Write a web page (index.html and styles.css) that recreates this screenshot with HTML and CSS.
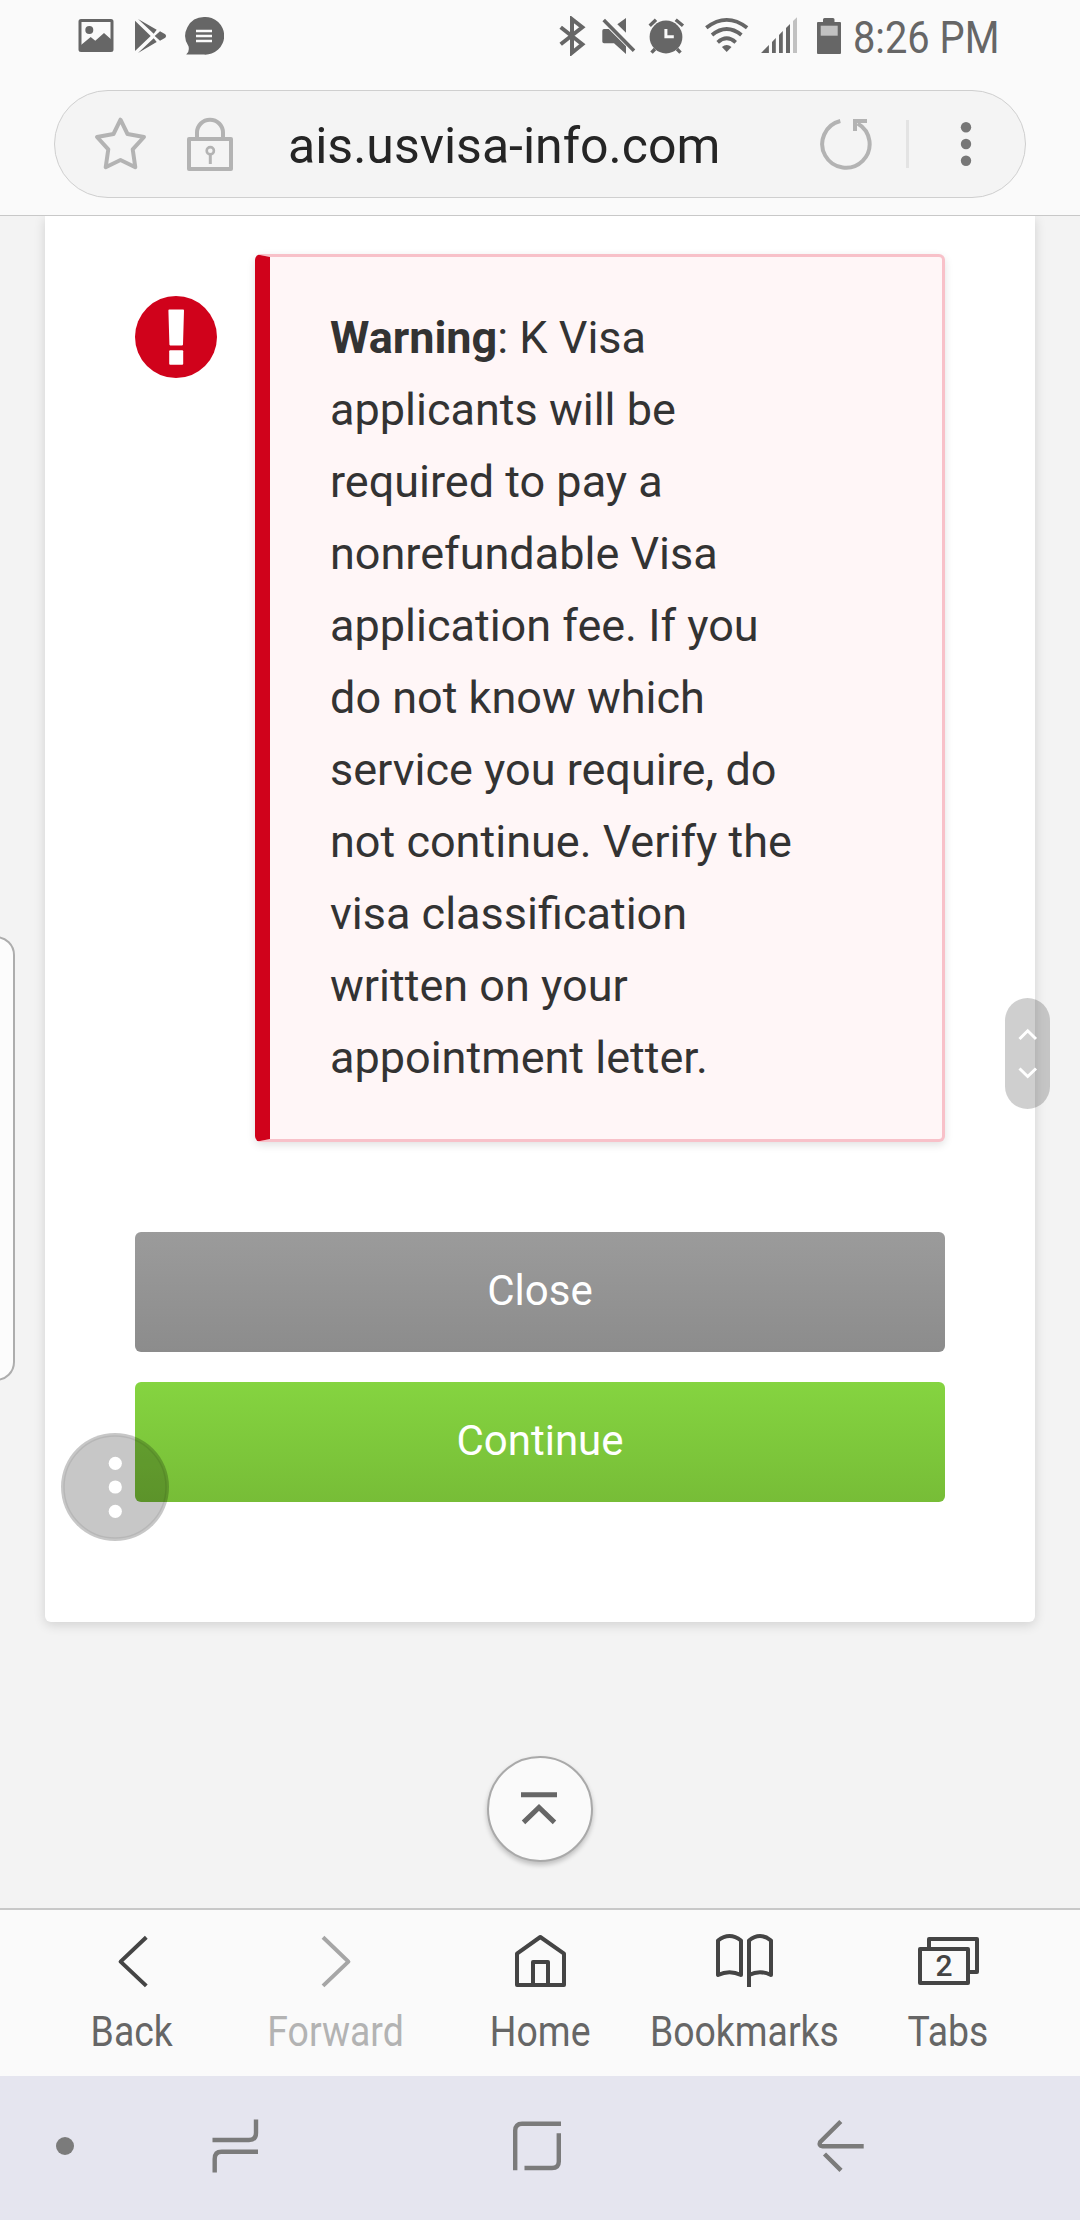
FILE: index.html
```
<!DOCTYPE html>
<html lang="en">
<head>
    <meta charset="UTF-8">
    <meta name="viewport" content="width=device-width, initial-scale=1.0">
    <title>ais.usvisa-info.com</title>
    <link rel="stylesheet" href="styles.css">
</head>
<body>
    <header class="top">
        <div class="status">
            <div class="status-group">
                <svg width="40" height="40" viewBox="0 0 40 40">
                    <rect x="2" y="4.5" width="32" height="30" rx="1" fill="none" stroke="#666" stroke-width="3"/>
                    <circle cx="11.3" cy="14" r="4"/>
                    <path d="M3 29L12.7 21L17.3 24.7L26 17L33 23.3V35H3Z"/>
                </svg>
                <svg width="34" height="40" viewBox="0 0 34 40">
                    <path d="M1 4.7L16.7 20L1 35ZM4 3L22.7 13.7L19.7 17.7ZM4 37L22.7 26L19.7 22.3ZM26 15.3L31.3 18.3Q33 20 31.3 21.7L26 24.7L20.7 20Z"/>
                </svg>
                <svg width="40" height="40" viewBox="0 0 40 40">
                    <path d="M20 1.1A18.8 18.8 0 1 1 20 38.6H2.2Q5.6 36 4.6 30.6A18.8 18.8 0 0 1 20 1.1Z"/>
                    <path d="M12 15H28M12 20H28M12 25H28" stroke="#fafafa" stroke-width="2.4"/>
                </svg>
            </div>
            <div class="status-group status-right">
                <svg width="32" height="40" viewBox="0 0 32 40">
                    <path d="M2.7 11.3L24.3 28.3L14 36.7V3.2L24.3 11.3L2.7 28.3" fill="none" stroke="#666" stroke-width="4"/>
                </svg>
                <svg width="38" height="40" viewBox="0 0 38 40">
                    <path d="M4 13H8.7L26 30.3V38L14 27.3H4Q2.3 27.3 2.3 25.5V14.7Q2.3 13 4 13ZM26 2V16.7L17.3 8.3Z"/>
                    <path d="M3.7 4L34 34.7" stroke="#666" stroke-width="3.6"/>
                </svg>
                <svg width="46" height="40" viewBox="0 0 46 40">
                    <circle cx="18" cy="21" r="16.4"/>
                    <path d="M1.7 9.7L8 3.7M27.7 3.7L35 9.7M3.5 36.7L7 33M32.5 36.7L29 33" stroke="#666" stroke-width="3.4"/>
                    <path d="M17.9 13V20.7H25.8" fill="none" stroke="#fafafa" stroke-width="3"/>
                </svg>
                <svg width="46" height="40" viewBox="0 0 46 40">
                    <path d="M2.3 11.8Q22.7 -4 43.1 11.8M8 19Q22.7 7 37.4 19M13.7 26.3Q22.7 18.3 31.7 26.3" fill="none" stroke="#666" stroke-width="3.8"/>
                    <path d="M17.9 31Q22.7 27.2 27.5 31L22.7 36Z"/>
                </svg>
                <svg width="46" height="40" viewBox="0 0 46 40">
                    <path d="M1 37L8.9 29V37ZM12 37V26L15.8 22V37ZM19 37V19L22.8 15V37ZM26 37V12L30 8V37Z"/>
                    <path d="M33 37V5L37 1.3V37Z" fill="#c1c1c1"/>
                </svg>
                <svg width="26" height="40" viewBox="0 0 26 40">
                    <path d="M2 6H7V3.5Q7 2 8.5 2H17Q18.5 2 18.5 3.5V6H24Q25 6 25 7V37Q25 38 24 38H2Q1 38 1 37V7Q1 6 2 6Z"/>
                    <rect x="4.7" y="9.7" width="17" height="10" fill="#c1c1c1"/>
                </svg>
                <span class="clock">8:26 PM</span>
            </div>
        </div>
        <div class="urlbar">
            <svg class="star" width="54" height="56" viewBox="0 0 54 56" fill="none" stroke="#b3b3b3" stroke-width="4" stroke-linejoin="round">
                <path d="M26.5 3.7L33.5 18L50 21L38.7 33.3L41.3 51.2L26.5 44L11.7 51.2L14.3 33.3L3 21L19.5 18Z"/>
            </svg>
            <svg class="lock" width="48" height="56" viewBox="0 0 48 56" fill="none" stroke="#b3b3b3" stroke-width="4" stroke-linejoin="round">
                <rect x="3" y="23" width="42" height="30"/>
                <path d="M11 22V16.7a13 13 0 0 1 26 0V22"/>
                <circle cx="24.3" cy="34.7" r="3.6" stroke-width="2.6"/>
                <path d="M24.3 38V48" stroke-width="3"/>
            </svg>
            <span class="url">ais.usvisa-info.com</span>
            <svg width="56" height="56" viewBox="0 0 56 56" fill="none" stroke="#b3b3b3" stroke-width="4">
                <path d="M22.3 5A23.7 23.7 0 1 0 39.6 7.4"/>
                <path d="M37 15V5H49"/>
            </svg>
            <div class="divider"></div>
            <svg class="more" width="12" height="48" viewBox="0 0 12 48" fill="#777">
                <circle cx="6" cy="7.3" r="5.2"/>
                <circle cx="6" cy="24" r="5.2"/>
                <circle cx="6" cy="40.7" r="5.2"/>
            </svg>
        </div>
    </header>

    <main class="page">
        <section class="card">
            <div class="notice">
                <svg class="alert" width="82" height="84" viewBox="0 0 82 84">
                    <circle cx="41" cy="42" r="41" fill="#d0021b"/>
                    <path d="M34.2 14.5H48.2Q49 14.5 49 15.4L48 49.6Q48 50.4 47.2 50.4H35.2Q34.4 50.4 34.4 49.6L33.4 15.4Q33.4 14.5 34.2 14.5Z" fill="#fff"/>
                    <rect x="34.2" y="55.3" width="14" height="14.4" rx="1" fill="#fff"/>
                </svg>
                <div class="warning">
                    <strong>Warning</strong>: K Visa applicants will be required to pay a nonrefundable Visa application fee. If you do not know which service you require, do not continue. Verify the visa classification written on your appointment letter.
                </div>
            </div>
            <div class="actions">
                <button class="btn btn-close">Close</button>
                <button class="btn btn-continue">Continue</button>
            </div>
        </section>

        <!-- floating controls -->
        <div class="edge-panel"></div>
        <div class="scroller">
            <svg width="45" height="111" viewBox="0 0 45 111" fill="none" stroke="#fff" stroke-width="3">
                <path d="M14.5 41L22.7 32.8L31 41M14.5 70.5L22.7 78.5L31 70.5"/>
            </svg>
        </div>
        <div class="assist">
            <svg width="108" height="108" viewBox="0 0 108 108" fill="#fff">
                <circle cx="54" cy="54" r="51" fill="none" stroke="#000" stroke-opacity="0.08" stroke-width="1.5"/>
                <circle cx="54.3" cy="30.3" r="6.6"/>
                <circle cx="54.3" cy="54" r="6.6"/>
                <circle cx="54.3" cy="78.3" r="6.6"/>
            </svg>
        </div>
        <div class="to-top">
            <svg width="40" height="40" viewBox="0 0 40 40" fill="none" stroke="#666" stroke-width="5">
                <path d="M1 7.7H37M3.5 35.4L19 20.5L34.5 35.4"/>
            </svg>
        </div>
    </main>

    <nav class="toolbar">
        <a class="tool">
            <svg width="64" height="60" viewBox="0 0 64 60"><path d="M46.3 5.3L20.6 29.6L46.3 53.9"/></svg>
            <span>Back</span>
        </a>
        <a class="tool disabled">
            <svg width="64" height="60" viewBox="0 0 64 60"><path d="M19 5.3L44.4 29.6L19 53.9"/></svg>
            <span>Forward</span>
        </a>
        <a class="tool">
            <svg width="64" height="60" viewBox="0 0 64 60"><path d="M9 53V21.7L32.3 5L56 21.7V53ZM25 53V30H40V53"/></svg>
            <span>Home</span>
        </a>
        <a class="tool">
            <svg width="64" height="60" viewBox="0 0 64 60"><path d="M6 8.5Q17.5 -0.5 29 8.5V43Q17.5 37.5 6 43ZM37 55V8.5Q48 -0.5 59 8.5V43Q48 37.5 37 43"/></svg>
            <span>Bookmarks</span>
        </a>
        <a class="tool">
            <svg width="64" height="60" viewBox="0 0 64 60">
                <path d="M4 17H52V51H4ZM13 17V7H61V40H52"/>
                <text class="tab-count" x="28" y="44">2</text>
            </svg>
            <span>Tabs</span>
        </a>
    </nav>

    <footer class="navbar">
        <div class="dot"></div>
        <svg class="recents" width="56" height="56" viewBox="0 0 56 56"><path d="M5.5 22H42Q49 22 49 15V1.5M51 33.8H14.5Q7.7 33.8 7.7 41V54.5"/></svg>
        <svg class="home" width="56" height="56" viewBox="0 0 56 56"><path d="M6.2 52.3V12.5Q6.2 5.8 13 5.8H52M15.5 50H43Q49.8 50 49.8 43.5V15.3"/></svg>
        <svg class="back" width="56" height="56" viewBox="0 0 56 56"><path d="M28.8 3.5L8.2 24Q6.4 28 10.5 28.2H51.7M12.5 36L29 52.4"/></svg>
    </footer>
</body>
</html>
```

FILE: styles.css
```
* {
    box-sizing: border-box;
}

body {
    margin: 0;
    width: 1080px;
    height: 2220px;
    display: flex;
    flex-direction: column;
    overflow: hidden;
    background-color: #f3f3f3;
    font-family: Roboto, sans-serif;
    color: #333;
}

svg {
    display: block;
    flex: none;
}

/* status bar + address bar */
.top {
    height: 216px;
    background-color: #fafafa;
    border-bottom: 1px solid #c8c8c8;
}

.status {
    height: 90px;
    padding: 16px 83px 0 78px;
    display: flex;
    justify-content: space-between;
    fill: #666;
}

.status-group {
    display: flex;
    gap: 16px;
}

.status-right {
    gap: 10px;
}

.clock {
    width: 145px;
    padding-left: 1px;
    font-size: 45px;
    line-height: 43px;
    white-space: nowrap;
    color: #666;
    transform: scaleX(0.885);
    transform-origin: left;
}

.urlbar {
    height: 108px;
    margin: 0 54px;
    padding-left: 39px;
    display: flex;
    align-items: center;
    background-color: #f4f4f4;
    border: 1px solid #cfcfcf;
    border-radius: 54px;
}

.lock {
    margin-left: 38px;
}

.url {
    width: 531px;
    margin-left: 53px;
    padding-top: 4px;
    padding-left: 1px;
    font-size: 50px;
    color: #252525;
}

.divider {
    width: 3px;
    height: 48px;
    margin-left: 32px;
    background-color: #e3e3e3;
}

.more {
    margin-left: 51px;
}

/* page content */
.page {
    position: relative;
    height: 1692px;
    overflow: hidden;
}

.card {
    margin: 0 45px;
    padding: 38px 90px 120px;
    background-color: #fff;
    border-radius: 0 0 6px 6px;
    box-shadow: 0 3px 12px rgba(0, 0, 0, 0.14);
}

.notice {
    display: flex;
    align-items: flex-start;
}

.alert {
    margin-top: 41px;
    margin-right: 38px;
}

.warning {
    flex: 1;
    padding: 45px 142px 45px 60px;
    border: 3px solid #f8c1c9;
    border-left: 15px solid #d0021b;
    border-radius: 6px;
    background-color: #fff6f7;
    box-shadow: 0 3px 9px rgba(0, 0, 0, 0.12);
    font-size: 45px;
    line-height: 72px;
}

.actions {
    margin-top: 90px;
    display: flex;
    flex-direction: column;
    gap: 30px;
}

.btn {
    height: 120px;
    padding: 0 0 4px;
    border: none;
    border-radius: 6px;
    color: #fff;
    font-family: inherit;
    font-size: 42px;
}

.btn-close {
    background: linear-gradient(#9b9b9b, #8c8c8c);
}

.btn-continue {
    background: linear-gradient(#85d440, #77bd37);
}

/* controls lying over the page */
.edge-panel {
    position: absolute;
    left: -30px;
    top: 720px;
    width: 45px;
    height: 445px;
    border: 2px solid #adadad;
    border-radius: 19px;
    background-color: #fcfcfc;
}

.scroller {
    position: absolute;
    left: 1005px;
    top: 782px;
    width: 45px;
    height: 111px;
    border-radius: 23px;
    background-color: rgba(0, 0, 0, 0.19);
}

.assist {
    position: absolute;
    left: 61px;
    top: 1217px;
    width: 108px;
    height: 108px;
    border-radius: 50%;
    background-color: rgba(0, 0, 0, 0.22);
}

.to-top {
    position: absolute;
    left: 487px;
    top: 1540px;
    width: 106px;
    height: 106px;
    padding: 29px 0 0 31px;
    border: 2px solid #a9a9a9;
    border-radius: 50%;
    background-color: #fafafa;
    box-shadow: 0 3px 5px rgba(0, 0, 0, 0.22);
}

/* browser toolbar */
.toolbar {
    height: 168px;
    padding: 22px 30px 0;
    display: flex;
    background-color: #fafafa;
    border-top: 2px solid #c8c8c8;
}

.tool {
    width: 204px;
    display: flex;
    flex-direction: column;
    align-items: center;
    color: #666;
    stroke: #444;
}

.tool svg {
    fill: none;
    stroke-width: 4;
    stroke-linejoin: round;
}

.tool span {
    margin-top: 15px;
    font-size: 42.5px;
    line-height: 50px;
    transform: scaleX(0.88);
}

.disabled {
    color: #b3b3b3;
    stroke: #a6a6a6;
}

.tab-count {
    fill: #444;
    stroke: none;
    font-size: 30px;
    font-weight: 500;
    text-anchor: middle;
}

/* system navigation */
.navbar {
    height: 144px;
    padding: 0 0 4px 56px;
    display: flex;
    align-items: center;
    background-color: #e5e5ef;
    fill: none;
    stroke: #7b7b7b;
    stroke-width: 4.4;
}

.dot {
    width: 18px;
    height: 18px;
    border-radius: 50%;
    background-color: #7b7b7b;
}

.recents {
    margin-left: 133px;
}

.home {
    margin-left: 246px;
}

.back {
    margin-left: 247px;
}
```
